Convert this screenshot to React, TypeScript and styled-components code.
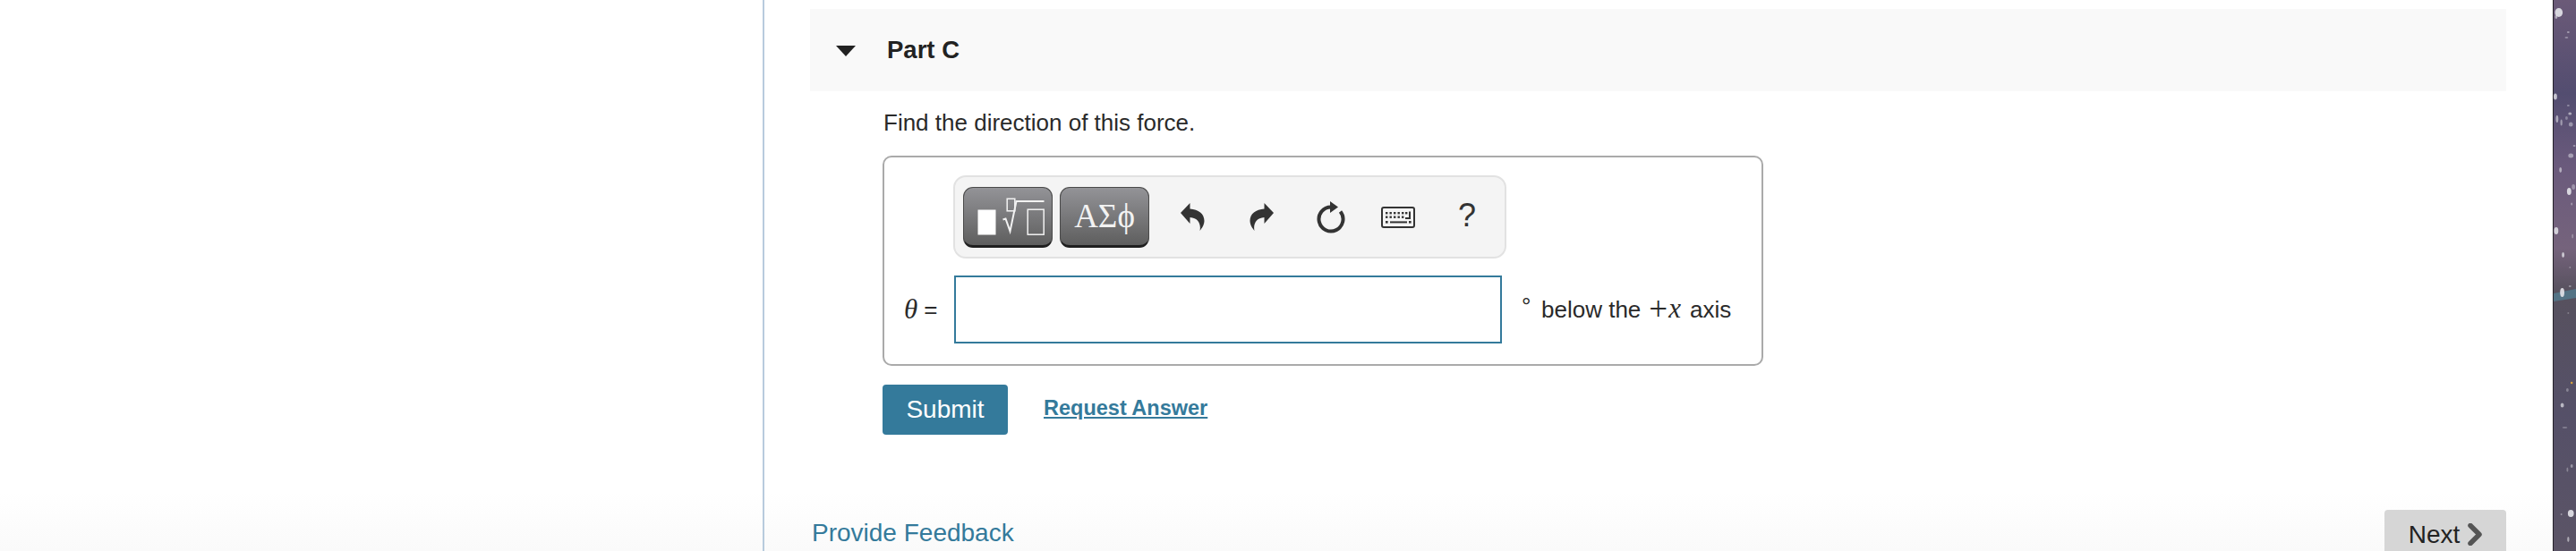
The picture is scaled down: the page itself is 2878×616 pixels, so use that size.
import React from "react";
import styled, { createGlobalStyle } from "styled-components";

const TEAL = "#347a9b";

const GlobalStyle = createGlobalStyle`
  html, body {
    margin: 0;
    padding: 0;
    background: #fff;
  }
  body {
    font-family: "Liberation Sans", Arial, sans-serif;
    color: #262626;
  }
`;

const Page = styled.div`
  display: flex;
  width: 2878px;
  height: 616px;
  overflow: hidden;
  background: linear-gradient(to bottom, #fff 0, #fff 550px, #fafafa 616px);
`;

const Gutter = styled.div`
  flex: 0 0 852px;
`;

const Content = styled.main`
  flex: 0 0 2000px;
  box-sizing: border-box;
  border-left: 2px solid #b8cbdd;
  padding: 10px 52px 0 51px;
`;

const PartHeader = styled.div`
  display: flex;
  align-items: center;
  height: 92px;
  background: #f9f9f9;
  padding-left: 29px;
`;

const Caret = styled.span`
  width: 0;
  height: 0;
  border-left: 11px solid transparent;
  border-right: 11px solid transparent;
  border-top: 12px solid #222;
  margin-right: 35px;
  margin-top: 2px;
`;

const PartTitle = styled.h2`
  margin: 0;
  font-size: 27.5px;
  line-height: 36px;
  font-weight: 700;
  color: #222;
`;

const Body = styled.div`
  padding-left: 81px;
`;

const Prompt = styled.p`
  margin: 17px 0 19px 1px;
  font-size: 26px;
  line-height: 36px;
  color: #2a2a2a;
`;

const AnswerBox = styled.div`
  box-sizing: border-box;
  width: 984px;
  height: 235px;
  border: 2px solid #aaa;
  border-radius: 10px;
  padding: 20px 0 0 22px;
`;

const Toolbar = styled.div`
  box-sizing: border-box;
  display: flex;
  align-items: center;
  width: 618px;
  height: 93px;
  margin-left: 55px;
  padding-left: 9px;
  background: #f4f4f4;
  border: 2px solid #e2e2e2;
  border-radius: 14px;
`;

const PaletteButton = styled.button`
  box-sizing: border-box;
  display: flex;
  align-items: center;
  justify-content: center;
  width: 100px;
  height: 68px;
  margin-right: 8px;
  padding: 0;
  border: 1.5px solid #4a4a4a;
  border-bottom: 3px solid #1f1f1f;
  border-radius: 11px;
  background: linear-gradient(to bottom, #939397, #5e5e5e);
  color: #f2f2f2;
  font-family: "Liberation Serif", "DejaVu Serif", serif;
  font-size: 37px;
  line-height: 1;
`;

const IconSlots = styled.div`
  display: flex;
  margin-left: 2px;
`;

const IconSlot = styled.span`
  display: flex;
  align-items: center;
  justify-content: center;
  width: 77px;
  height: 68px;
  color: #333;
`;

const HelpMark = styled.span`
  font-size: 36px;
  line-height: 1;
  color: #333;
  margin: -4px 3px 0 0;
`;

const KeySlot = styled(IconSlot)`
  padding-right: 3px;
  box-sizing: border-box;
`;

const AnswerRow = styled.div`
  display: flex;
  align-items: center;
  margin-top: 19px;
`;

const Label = styled.label`
  display: flex;
  align-items: center;
  width: 56px;
  font-size: 26px;
  color: #2a2a2a;
`;

const Theta = styled.i`
  font-family: "Liberation Serif", serif;
  font-size: 31px;
  margin-right: 7px;
`;

const AnswerInput = styled.input`
  box-sizing: border-box;
  width: 612px;
  height: 76px;
  border: 2px solid ${TEAL};
  border-radius: 0;
  background: #fff;
  outline: none;
`;

const Units = styled.span`
  display: flex;
  align-items: baseline;
  margin-left: 22px;
  font-size: 26px;
  line-height: 36px;
  color: #2a2a2a;
  white-space: pre;
`;

const Degree = styled.span`
  width: 22px;
  transform: translateY(-4px);
`;

const MathText = styled.span`
  font-family: "Liberation Serif", serif;
  font-size: 31px;
  line-height: 0;
  margin: 0 10px 0 9px;
`;

const MathPlus = styled.span`
  display: inline-block;
  font-size: 37px;
  font-weight: 400;
  margin-right: 1px;
  transform: translateY(3px);
`;

const ActionRow = styled.div`
  display: flex;
  align-items: center;
  margin-top: 21px;
`;

const SubmitButton = styled.button`
  width: 140px;
  height: 56px;
  padding: 0;
  border: none;
  border-radius: 4px;
  background: ${TEAL};
  color: #fff;
  font-family: inherit;
  font-size: 28px;
`;

const RequestLink = styled.a`
  margin: -4px 0 0 40px;
  font-size: 23.5px;
  font-weight: 700;
  color: ${TEAL};
  text-decoration: underline;
`;

const FooterRow = styled.div`
  display: flex;
  justify-content: space-between;
  align-items: flex-start;
  margin-top: 84px;
`;

const FeedbackLink = styled.a`
  margin: 8px 0 0 2px;
  font-size: 28px;
  line-height: 36px;
  color: ${TEAL};
`;

const NextButton = styled.button`
  display: flex;
  align-items: flex-start;
  justify-content: center;
  gap: 9px;
  width: 136px;
  height: 56px;
  padding: 12px 0 0;
  border: none;
  border-radius: 4px;
  background: #d6d6d6;
  color: #222;
  font-family: inherit;
  font-size: 28px;
  line-height: 32px;
`;

const Wallpaper = styled.svg`
  flex: 0 0 26px;
  display: block;
  height: 616px;
  border-left: 1.5px solid #26222a;
  box-sizing: border-box;
`;

const UNDO = "M0 11 L10.5 0 V6.5 C20 7 26.5 12 26.5 20 C26.5 24 24 28 21.5 31 C23 24 20 16.5 10.5 16 V23 Z";

const UndoIcon = ({ flip }: { flip?: boolean }) => (
  <svg width="27" height="31" viewBox="0 0 27 31" style={flip ? { transform: "scaleX(-1)" } : undefined} aria-hidden>
    <path d={UNDO} fill="currentColor" />
  </svg>
);

const ResetIcon = () => (
  <svg width="34" height="36" viewBox="0 0 34 36" aria-hidden>
    <path d="M17 6.5 A13.5 13.5 0 1 0 27.5 11.5" fill="none" stroke="currentColor" strokeWidth="4" />
    <polygon points="16,0 25,6.5 16,13" fill="currentColor" />
  </svg>
);

const keyRows: [number, number[]][] = [
  [6, [5, 9.5, 14, 18.5, 23, 27]],
  [10.5, [5, 9.5, 14, 18.5, 23]],
];

const KeyboardIcon = () => (
  <svg width="38" height="24" viewBox="0 0 38 24" aria-hidden>
    <rect x="1" y="1" width="36" height="22" rx="2" fill="none" stroke="currentColor" strokeWidth="2" />
    {keyRows.map(([y, xs]) => xs.map((x) => <rect key={`${x}-${y}`} x={x} y={y} width="2.4" height="2.4" fill="currentColor" />))}
    <path d="M32 5.5 V13 H27" fill="none" stroke="currentColor" strokeWidth="2" />
    <rect x="5" y="16" width="2.6" height="2.6" fill="currentColor" />
    <rect x="10" y="16.4" width="19" height="2" fill="currentColor" />
    <rect x="31" y="16" width="2.6" height="2.6" fill="currentColor" />
  </svg>
);

const TemplatesIcon = () => (
  <svg width="97" height="63" viewBox="0 0 97 63" aria-hidden>
    <g transform="translate(-1.5 -1.5)">
      <rect x="16" y="26" width="20" height="28" fill="#fff" />
      <rect x="48.7" y="13.7" width="8.6" height="13.6" fill="none" stroke="#f2f2f2" strokeWidth="1.5" />
      <path d="M44 37 L47 36 L52 50 L59 16.6 H90" fill="none" stroke="#f2f2f2" strokeWidth="2" />
      <rect x="71.7" y="25.7" width="18" height="28" fill="none" stroke="#f2f2f2" strokeWidth="1.5" />
    </g>
  </svg>
);

// specks on the desktop wallpaper that shows past the browser window: [x, y, rx, ry, opacity]
const stars: number[][] = [
  [6, 14, 4.5, 5, 0.9], [3, 19, 1.5, 2, 0.6], [17, 36, 1.5, 1, 0.5], [15, 42, 2, 1, 0.4],
  [2, 108, 2, 3.5, 0.8], [17, 118, 1.5, 1, 0.4], [4, 133, 1.5, 4, 0.6], [9, 137, 1.2, 3.5, 0.5],
  [19, 127, 2, 1.5, 0.6], [20, 139, 2.5, 2.5, 0.45], [15, 132, 1.5, 2, 0.35], [24, 163, 1.5, 1, 0.45],
  [20, 174, 3, 2.5, 0.5], [8, 190, 1.5, 3, 0.6], [18, 214, 2.5, 4, 0.9], [23, 209, 2, 3, 0.4],
  [21, 228, 1, 1.5, 0.45], [3, 258, 2.5, 4, 0.85], [11, 285, 1.5, 3, 0.8], [22, 264, 1, 2.5, 0.35],
  [19, 299, 1, 1, 0.35], [10, 327, 2.5, 5, 0.9], [19, 320, 1.5, 1, 0.45], [17, 350, 1, 1, 0.3],
  [16, 436, 1.5, 2, 0.35], [10, 453, 2, 2.5, 0.7], [13, 478, 3, 1, 0.3], [21, 521, 1.5, 2, 0.45],
  [16, 525, 1, 2.5, 0.35], [20, 574, 3.5, 4, 0.9], [9, 575, 1, 1, 0.45], [17, 603, 1.2, 3, 0.6],
];

const WallpaperStrip = () => (
  <Wallpaper viewBox="0 0 26 616" preserveAspectRatio="none" aria-hidden>
    <defs>
      <linearGradient id="sky" x1="0" y1="0" x2="0" y2="1">
        <stop offset="0" stopColor="#6b5a78" />
        <stop offset="0.17" stopColor="#534d70" />
        <stop offset="0.3" stopColor="#6a5a7c" />
        <stop offset="0.45" stopColor="#75637c" />
        <stop offset="0.53" stopColor="#57515e" />
        <stop offset="0.75" stopColor="#555068" />
        <stop offset="1" stopColor="#5b5466" />
      </linearGradient>
      <filter id="soft">
        <feGaussianBlur stdDeviation="0.6" />
      </filter>
    </defs>
    <rect width="26" height="616" fill="url(#sky)" />
    <path d="M0 328 L26 323 V333 L0 337 Z" fill="#527f93" opacity="0.75" filter="url(#soft)" />
    <circle cx="21" cy="428" r="1.3" fill="#d9a33c" />
    <g filter="url(#soft)">
      {stars.map(([x, y, rx, ry, o]) => (
        <ellipse key={`${x}-${y}`} cx={x} cy={y} rx={rx} ry={ry} fill="#e4e4ea" opacity={o} />
      ))}
    </g>
  </Wallpaper>
);

const App = () => (
  <Page>
    <GlobalStyle />
    <Gutter />
    <Content>
      <PartHeader>
        <Caret />
        <PartTitle>Part C</PartTitle>
      </PartHeader>
      <Body>
        <Prompt>Find the direction of this force.</Prompt>
        <AnswerBox>
          <Toolbar>
            <PaletteButton type="button" aria-label="Templates">
              <TemplatesIcon />
            </PaletteButton>
            <PaletteButton type="button">ΑΣϕ</PaletteButton>
            <IconSlots>
              <IconSlot><UndoIcon /></IconSlot>
              <IconSlot><UndoIcon flip /></IconSlot>
              <IconSlot><ResetIcon /></IconSlot>
              <KeySlot><KeyboardIcon /></KeySlot>
              <IconSlot><HelpMark>?</HelpMark></IconSlot>
            </IconSlots>
          </Toolbar>
          <AnswerRow>
            <Label>
              <Theta>θ</Theta>=
            </Label>
            <AnswerInput type="text" />
            <Units>
              <Degree>°</Degree>
              below the
              <MathText>
                <MathPlus>+</MathPlus>
                <i>x</i>
              </MathText>
              axis
            </Units>
          </AnswerRow>
        </AnswerBox>
        <ActionRow>
          <SubmitButton type="button">Submit</SubmitButton>
          <RequestLink href="#">Request Answer</RequestLink>
        </ActionRow>
      </Body>
      <FooterRow>
        <FeedbackLink>Provide Feedback</FeedbackLink>
        <NextButton type="button">
          Next
          <svg width="16" height="25" viewBox="0 0 16 25" aria-hidden style={{ marginTop: 3 }}>
            <path d="M3 2.5 L13 12.5 L3 22.5" fill="none" stroke="#555" strokeWidth="5.5" strokeLinecap="round" strokeLinejoin="round" />
          </svg>
        </NextButton>
      </FooterRow>
    </Content>
    <WallpaperStrip />
  </Page>
);

export default App;
